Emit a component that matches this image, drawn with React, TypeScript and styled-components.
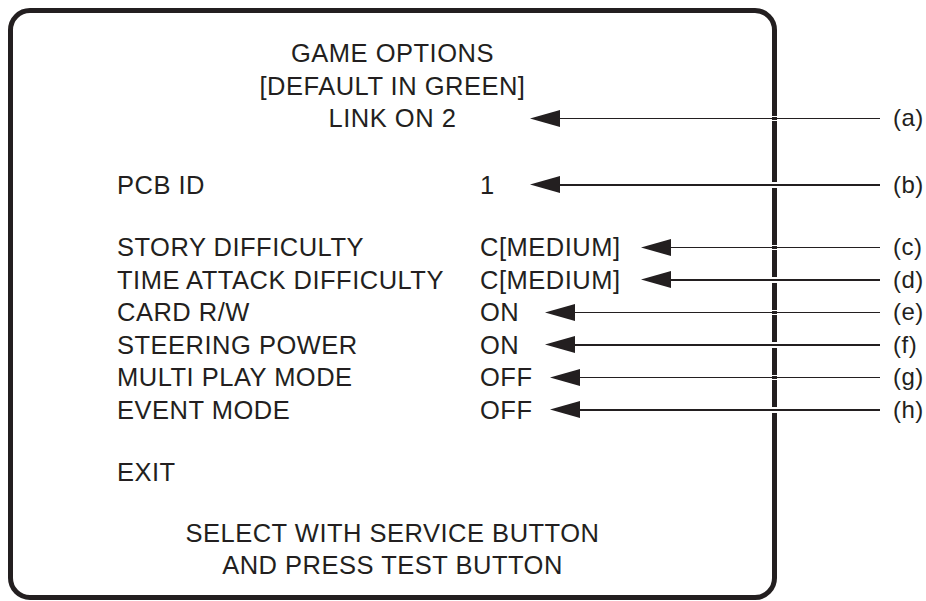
import React from 'react';
import styled, { createGlobalStyle } from 'styled-components';

const ink = '#231f20';

const GlobalStyle = createGlobalStyle`
  html, body {
    margin: 0;
    padding: 0;
    background: #fff;
  }
  body {
    font-family: "Liberation Sans", Arial, sans-serif;
    color: ${ink};
  }
`;

const Page = styled.div`
  width: 926px;
  height: 601px;
  overflow: hidden;
`;

const Panel = styled.div`
  box-sizing: border-box;
  margin: 8px 0 0 8px;
  width: 769px;
  height: 592px;
  border: 5px solid ${ink};
  border-radius: 22px;
  padding-top: 24px;
  display: flex;
  flex-direction: column;
  font-size: 25.5px;
  letter-spacing: 0.5px;
  line-height: 32.5px;
`;

const Block = styled.div<{ $gap?: number }>`
  margin-top: ${p => p.$gap ?? 0}px;
`;

const Centered = styled.div`
  text-align: center;
  white-space: nowrap;
`;

const CenteredRow = styled.div`
  display: grid;
  grid-template-columns: 1fr auto 1fr;
  align-items: center;
  height: 32.5px;
`;

const Row = styled.div`
  display: flex;
  align-items: center;
  height: 32.5px;
  padding-left: 104px;
  margin-right: -154px;
  white-space: nowrap;
`;

const Label = styled.span`
  flex: none;
  width: 363px;
`;

const Value = styled.span`
  flex: none;
`;

const CalloutWrap = styled.div<{ $lead: number; $stretch?: boolean }>`
  display: flex;
  align-items: center;
  flex: 1;
  min-width: 0;
  margin-left: ${p => p.$lead}px;
  margin-right: ${p => (p.$stretch ? -154 : 0)}px;
`;

const Head = styled.svg`
  flex: none;
  display: block;
`;

const Line = styled.div`
  flex: 1;
  height: 1.5px;
  background: ${ink};
  box-shadow: 0 2px 0 0 #fff, 0 -2px 0 0 #fff;
`;

const Tag = styled.span`
  flex: none;
  width: 33px;
  margin-left: 13px;
  text-align: left;
  font-size: 24px;
  letter-spacing: 0.5px;
`;

const Callout: React.FC<{ tag: string; lead: number; stretch?: boolean }> = ({ tag, lead, stretch }) => (
  <CalloutWrap $lead={lead} $stretch={stretch}>
    <Head width="30" height="17" viewBox="0 0 30 17">
      <polygon points="0,8.5 30,0 30,17" fill={ink} />
    </Head>
    <Line />
    <Tag>({tag})</Tag>
  </CalloutWrap>
);

const options = [
  { label: 'STORY DIFFICULTY', value: 'C[MEDIUM]', tag: 'c', lead: 20 },
  { label: 'TIME ATTACK DIFFICULTY', value: 'C[MEDIUM]', tag: 'd', lead: 20 },
  { label: 'CARD R/W', value: 'ON', tag: 'e', lead: 26 },
  { label: 'STEERING POWER', value: 'ON', tag: 'f', lead: 26 },
  { label: 'MULTI PLAY MODE', value: 'OFF', tag: 'g', lead: 17 },
  { label: 'EVENT MODE', value: 'OFF', tag: 'h', lead: 17 },
];

const App: React.FC = () => (
  <Page>
    <GlobalStyle />
    <Panel>
      <Block>
        <Centered>GAME OPTIONS</Centered>
        <Centered>[DEFAULT IN GREEN]</Centered>
        <CenteredRow>
          <span />
          <Centered>LINK ON 2</Centered>
          <Callout tag="a" lead={74} stretch />
        </CenteredRow>
      </Block>

      <Block $gap={34}>
        <Row>
          <Label>PCB ID</Label>
          <Value>1</Value>
          <Callout tag="b" lead={35} />
        </Row>
      </Block>

      <Block $gap={30}>
        {options.map(o => (
          <Row key={o.tag}>
            <Label>{o.label}</Label>
            <Value>{o.value}</Value>
            <Callout tag={o.tag} lead={o.lead} />
          </Row>
        ))}
      </Block>

      <Block $gap={30}>
        <Row>
          <Label>EXIT</Label>
        </Row>
      </Block>

      <Block $gap={28}>
        <Centered>SELECT WITH SERVICE BUTTON</Centered>
        <Centered>AND PRESS TEST BUTTON</Centered>
      </Block>
    </Panel>
  </Page>
);

export default App;
